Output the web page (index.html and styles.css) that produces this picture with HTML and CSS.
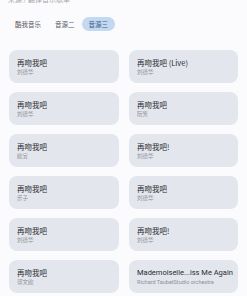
FILE: index.html
```html
<!DOCTYPE html>
<html lang="zh">
<head>
<meta charset="utf-8">
<link rel="stylesheet" href="styles.css">
</head>
<body>
<div class="page">
  <div class="crumb">来源 / 翻译音乐歌单</div>
  <div class="tabs">
    <span class="tab">酷我音乐</span>
    <span class="tab">音源二</span>
    <span class="tab active">音源三</span>
  </div>
  <div class="grid">
    <div class="card"><div class="title">再吻我吧</div><div class="sub">刘德华</div></div>
    <div class="card"><div class="title">再吻我吧 (Live)</div><div class="sub">刘德华</div></div>
    <div class="card"><div class="title">再吻我吧</div><div class="sub">刘德华</div></div>
    <div class="card"><div class="title">再吻我吧</div><div class="sub">阮笑</div></div>
    <div class="card"><div class="title">再吻我吧</div><div class="sub">欧宜</div></div>
    <div class="card"><div class="title">再吻我吧!</div><div class="sub">刘德华</div></div>
    <div class="card"><div class="title">再吻我吧</div><div class="sub">乐子</div></div>
    <div class="card"><div class="title">再吻我吧</div><div class="sub">刘德华</div></div>
    <div class="card"><div class="title">再吻我吧</div><div class="sub">刘德华</div></div>
    <div class="card"><div class="title">再吻我吧!</div><div class="sub">刘德华</div></div>
    <div class="card"><div class="title">再吻我吧</div><div class="sub">郭文欧</div></div>
    <div class="card"><div class="title latin">Mademoiselle...iss Me Again</div><div class="sub latin">Richard TaubetStudio orchestra</div></div>
  </div>
</div>
</body>
</html>
```

FILE: styles.css
```css
html, body {
  margin: 0;
  padding: 0;
  background: #fbfbfd;
}
body {
  font-family: "Noto Sans CJK SC", "Noto Sans", Roboto, sans-serif;
  overflow: hidden;
}
.page {
  padding: 0 9px 0 9px;
}
.crumb {
  font-size: 7px;
  line-height: 8px;
  height: 8px;
  margin-top: -5px;
  color: #a4a6ae;
  margin-left: -1px;
}
.tabs {
  display: flex;
  margin-top: 14px;
  margin-left: -1px;
  height: 14px;
}
.tab {
  padding: 0 7px;
  height: 14px;
  line-height: 14px;
  font-size: 6.5px;
  color: #5a5c64;
  border-radius: 7px;
}
.tab.active {
  background: #c3d8f1;
  color: #3d5f8c;
}
.grid {
  margin-top: 19px;
  display: grid;
  grid-template-columns: 110px 109px;
  column-gap: 10px;
  row-gap: 9px;
}
.card {
  background: #e4e6ee;
  border-radius: 8px;
  height: 33px;
  box-sizing: border-box;
  padding: 8px 7px 0 8px;
  overflow: hidden;
}
.title {
  font-size: 7.5px;
  line-height: 10px;
  color: #2a2b30;
  white-space: nowrap;
}
.sub {
  font-size: 5.5px;
  line-height: 8px;
  color: #8d8f97;
  white-space: nowrap;
}
.latin {
  font-family: Roboto, "Noto Sans CJK SC", sans-serif;
}
```
